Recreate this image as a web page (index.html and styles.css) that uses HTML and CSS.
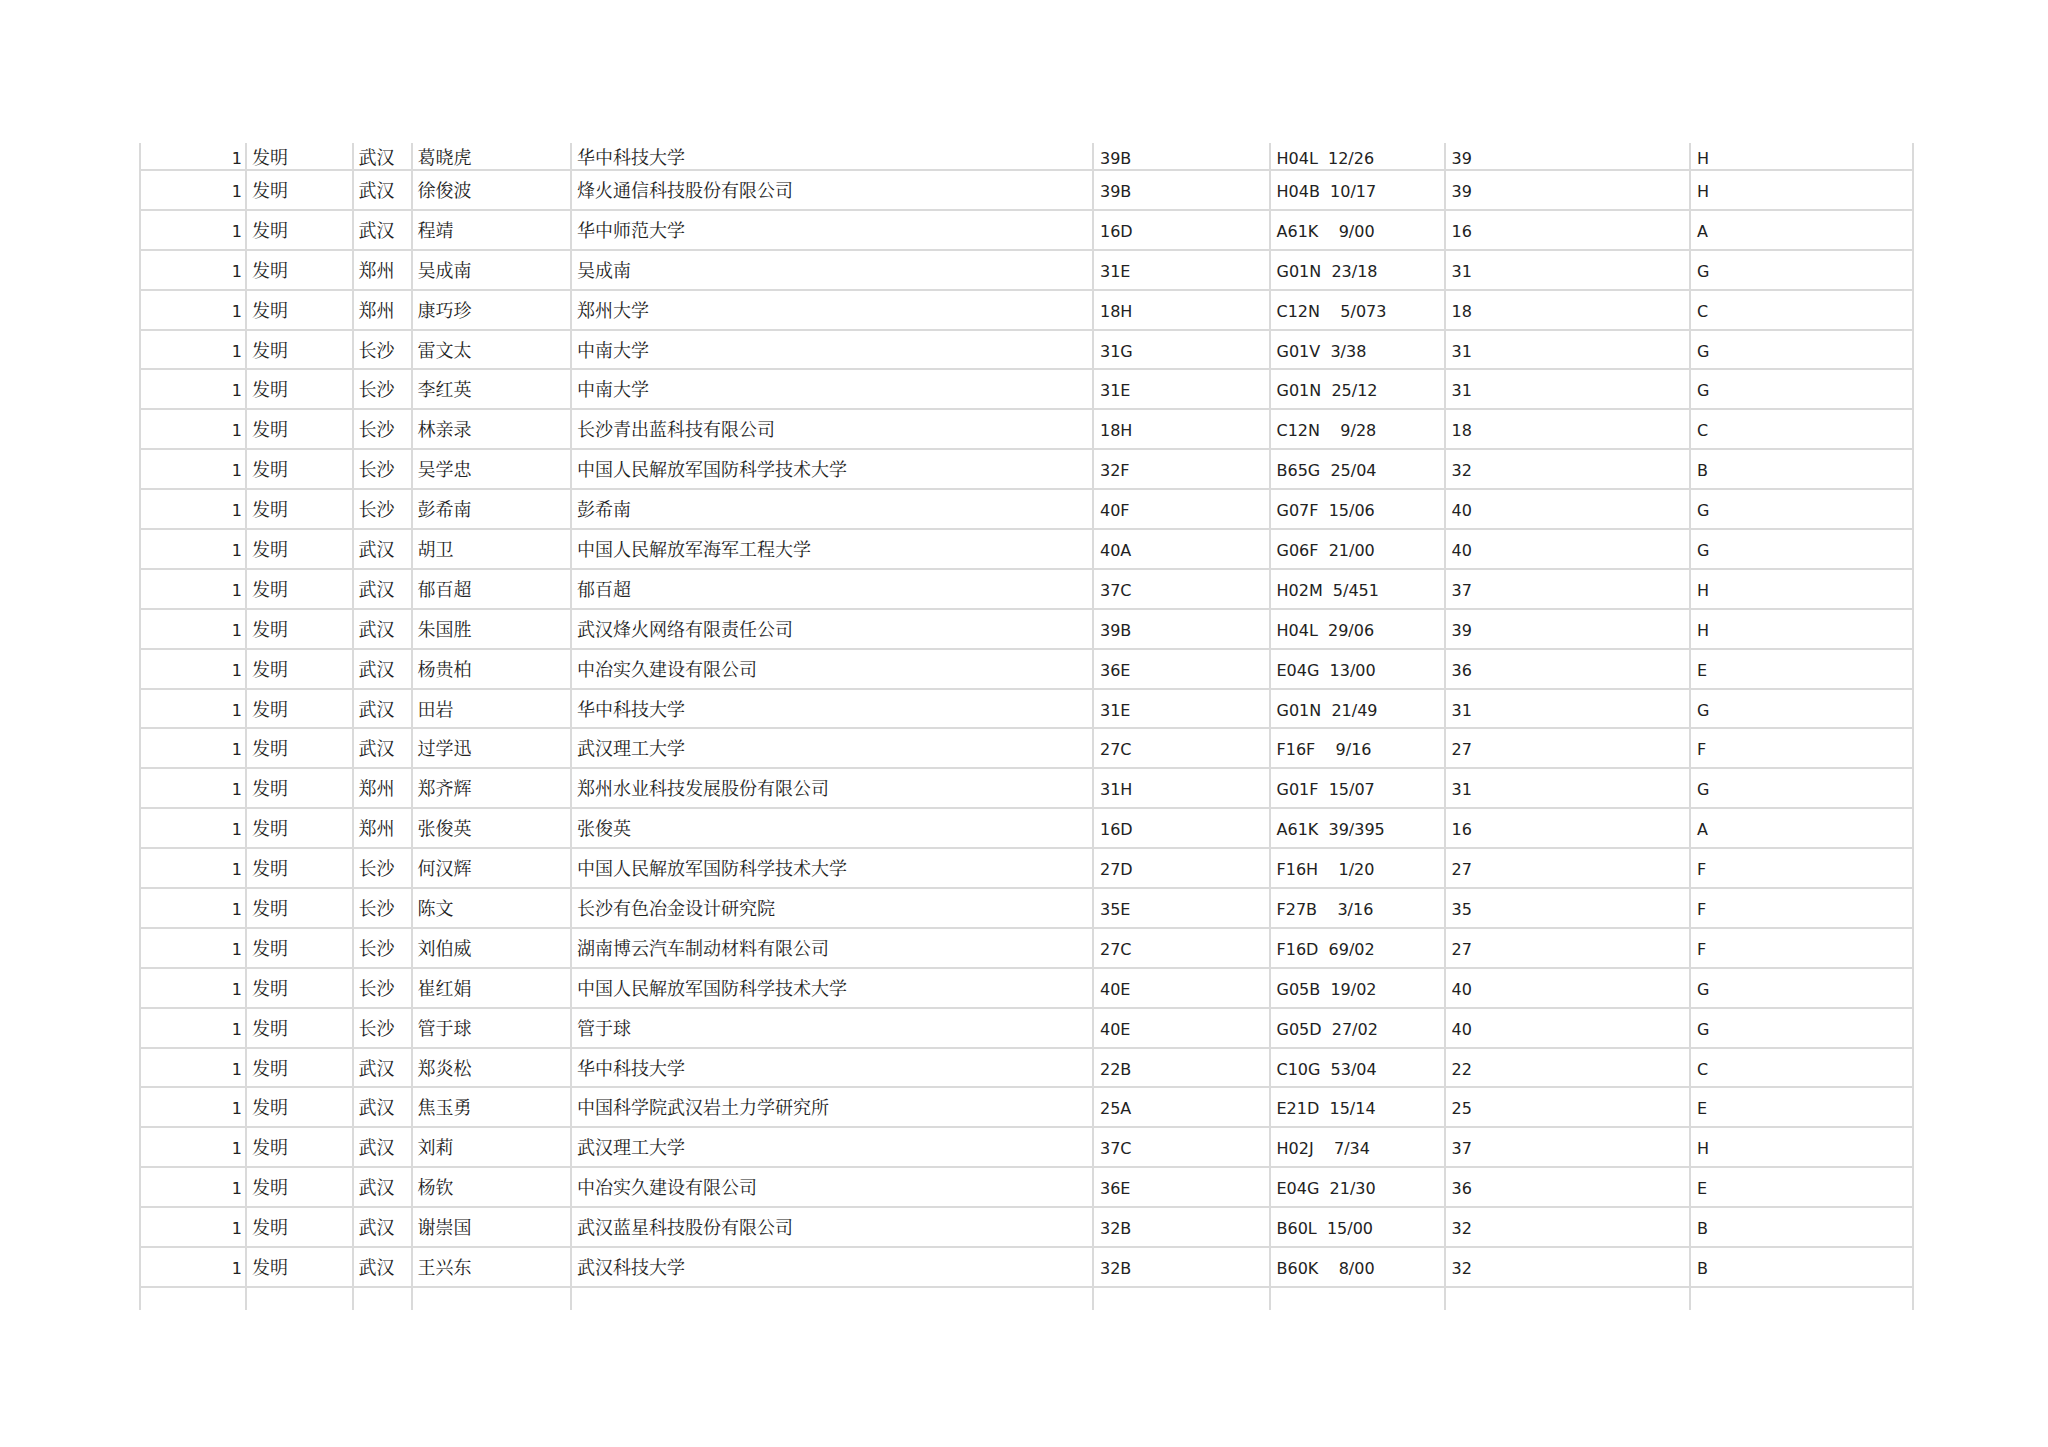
FILE: index.html
```html
<!DOCTYPE html>
<html lang="zh-CN">
<head>
<meta charset="utf-8">
<title>专利列表</title>
<link rel="stylesheet" href="styles.css">
</head>
<body>
<div class="sheet">
<div class="grid">
<div class="row first"><span class="c n">1</span><span class="c z">发明</span><span class="c z">武汉</span><span class="c z">葛晓虎</span><span class="c z">华中科技大学</span><span class="c">39B</span><span class="c">H04L  12/26</span><span class="c">39</span><span class="c">H</span></div>
<div class="row"><span class="c n">1</span><span class="c z">发明</span><span class="c z">武汉</span><span class="c z">徐俊波</span><span class="c z">烽火通信科技股份有限公司</span><span class="c">39B</span><span class="c">H04B  10/17</span><span class="c">39</span><span class="c">H</span></div>
<div class="row"><span class="c n">1</span><span class="c z">发明</span><span class="c z">武汉</span><span class="c z">程靖</span><span class="c z">华中师范大学</span><span class="c">16D</span><span class="c">A61K  &#8199;9/00</span><span class="c">16</span><span class="c">A</span></div>
<div class="row"><span class="c n">1</span><span class="c z">发明</span><span class="c z">郑州</span><span class="c z">吴成南</span><span class="c z">吴成南</span><span class="c">31E</span><span class="c">G01N  23/18</span><span class="c">31</span><span class="c">G</span></div>
<div class="row"><span class="c n">1</span><span class="c z">发明</span><span class="c z">郑州</span><span class="c z">康巧珍</span><span class="c z">郑州大学</span><span class="c">18H</span><span class="c">C12N  &#8199;5/073</span><span class="c">18</span><span class="c">C</span></div>
<div class="row"><span class="c n">1</span><span class="c z">发明</span><span class="c z">长沙</span><span class="c z">雷文太</span><span class="c z">中南大学</span><span class="c">31G</span><span class="c">G01V  3/38</span><span class="c">31</span><span class="c">G</span></div>
<div class="row"><span class="c n">1</span><span class="c z">发明</span><span class="c z">长沙</span><span class="c z">李红英</span><span class="c z">中南大学</span><span class="c">31E</span><span class="c">G01N  25/12</span><span class="c">31</span><span class="c">G</span></div>
<div class="row"><span class="c n">1</span><span class="c z">发明</span><span class="c z">长沙</span><span class="c z">林亲录</span><span class="c z">长沙青出蓝科技有限公司</span><span class="c">18H</span><span class="c">C12N  &#8199;9/28</span><span class="c">18</span><span class="c">C</span></div>
<div class="row"><span class="c n">1</span><span class="c z">发明</span><span class="c z">长沙</span><span class="c z">吴学忠</span><span class="c z">中国人民解放军国防科学技术大学</span><span class="c">32F</span><span class="c">B65G  25/04</span><span class="c">32</span><span class="c">B</span></div>
<div class="row"><span class="c n">1</span><span class="c z">发明</span><span class="c z">长沙</span><span class="c z">彭希南</span><span class="c z">彭希南</span><span class="c">40F</span><span class="c">G07F  15/06</span><span class="c">40</span><span class="c">G</span></div>
<div class="row"><span class="c n">1</span><span class="c z">发明</span><span class="c z">武汉</span><span class="c z">胡卫</span><span class="c z">中国人民解放军海军工程大学</span><span class="c">40A</span><span class="c">G06F  21/00</span><span class="c">40</span><span class="c">G</span></div>
<div class="row"><span class="c n">1</span><span class="c z">发明</span><span class="c z">武汉</span><span class="c z">郁百超</span><span class="c z">郁百超</span><span class="c">37C</span><span class="c">H02M  5/451</span><span class="c">37</span><span class="c">H</span></div>
<div class="row"><span class="c n">1</span><span class="c z">发明</span><span class="c z">武汉</span><span class="c z">朱国胜</span><span class="c z">武汉烽火网络有限责任公司</span><span class="c">39B</span><span class="c">H04L  29/06</span><span class="c">39</span><span class="c">H</span></div>
<div class="row"><span class="c n">1</span><span class="c z">发明</span><span class="c z">武汉</span><span class="c z">杨贵柏</span><span class="c z">中冶实久建设有限公司</span><span class="c">36E</span><span class="c">E04G  13/00</span><span class="c">36</span><span class="c">E</span></div>
<div class="row"><span class="c n">1</span><span class="c z">发明</span><span class="c z">武汉</span><span class="c z">田岩</span><span class="c z">华中科技大学</span><span class="c">31E</span><span class="c">G01N  21/49</span><span class="c">31</span><span class="c">G</span></div>
<div class="row"><span class="c n">1</span><span class="c z">发明</span><span class="c z">武汉</span><span class="c z">过学迅</span><span class="c z">武汉理工大学</span><span class="c">27C</span><span class="c">F16F  &#8199;9/16</span><span class="c">27</span><span class="c">F</span></div>
<div class="row"><span class="c n">1</span><span class="c z">发明</span><span class="c z">郑州</span><span class="c z">郑齐辉</span><span class="c z">郑州水业科技发展股份有限公司</span><span class="c">31H</span><span class="c">G01F  15/07</span><span class="c">31</span><span class="c">G</span></div>
<div class="row"><span class="c n">1</span><span class="c z">发明</span><span class="c z">郑州</span><span class="c z">张俊英</span><span class="c z">张俊英</span><span class="c">16D</span><span class="c">A61K  39/395</span><span class="c">16</span><span class="c">A</span></div>
<div class="row"><span class="c n">1</span><span class="c z">发明</span><span class="c z">长沙</span><span class="c z">何汉辉</span><span class="c z">中国人民解放军国防科学技术大学</span><span class="c">27D</span><span class="c">F16H  &#8199;1/20</span><span class="c">27</span><span class="c">F</span></div>
<div class="row"><span class="c n">1</span><span class="c z">发明</span><span class="c z">长沙</span><span class="c z">陈文</span><span class="c z">长沙有色冶金设计研究院</span><span class="c">35E</span><span class="c">F27B  &#8199;3/16</span><span class="c">35</span><span class="c">F</span></div>
<div class="row"><span class="c n">1</span><span class="c z">发明</span><span class="c z">长沙</span><span class="c z">刘伯威</span><span class="c z">湖南博云汽车制动材料有限公司</span><span class="c">27C</span><span class="c">F16D  69/02</span><span class="c">27</span><span class="c">F</span></div>
<div class="row"><span class="c n">1</span><span class="c z">发明</span><span class="c z">长沙</span><span class="c z">崔红娟</span><span class="c z">中国人民解放军国防科学技术大学</span><span class="c">40E</span><span class="c">G05B  19/02</span><span class="c">40</span><span class="c">G</span></div>
<div class="row"><span class="c n">1</span><span class="c z">发明</span><span class="c z">长沙</span><span class="c z">管于球</span><span class="c z">管于球</span><span class="c">40E</span><span class="c">G05D  27/02</span><span class="c">40</span><span class="c">G</span></div>
<div class="row"><span class="c n">1</span><span class="c z">发明</span><span class="c z">武汉</span><span class="c z">郑炎松</span><span class="c z">华中科技大学</span><span class="c">22B</span><span class="c">C10G  53/04</span><span class="c">22</span><span class="c">C</span></div>
<div class="row"><span class="c n">1</span><span class="c z">发明</span><span class="c z">武汉</span><span class="c z">焦玉勇</span><span class="c z">中国科学院武汉岩土力学研究所</span><span class="c">25A</span><span class="c">E21D  15/14</span><span class="c">25</span><span class="c">E</span></div>
<div class="row"><span class="c n">1</span><span class="c z">发明</span><span class="c z">武汉</span><span class="c z">刘莉</span><span class="c z">武汉理工大学</span><span class="c">37C</span><span class="c">H02J  &#8199;7/34</span><span class="c">37</span><span class="c">H</span></div>
<div class="row"><span class="c n">1</span><span class="c z">发明</span><span class="c z">武汉</span><span class="c z">杨钦</span><span class="c z">中冶实久建设有限公司</span><span class="c">36E</span><span class="c">E04G  21/30</span><span class="c">36</span><span class="c">E</span></div>
<div class="row"><span class="c n">1</span><span class="c z">发明</span><span class="c z">武汉</span><span class="c z">谢崇国</span><span class="c z">武汉蓝星科技股份有限公司</span><span class="c">32B</span><span class="c">B60L  15/00</span><span class="c">32</span><span class="c">B</span></div>
<div class="row"><span class="c n">1</span><span class="c z">发明</span><span class="c z">武汉</span><span class="c z">王兴东</span><span class="c z">武汉科技大学</span><span class="c">32B</span><span class="c">B60K  &#8199;8/00</span><span class="c">32</span><span class="c">B</span></div>
<div class="row last"><span class="c"></span><span class="c"></span><span class="c"></span><span class="c"></span><span class="c"></span><span class="c"></span><span class="c"></span><span class="c"></span><span class="c"></span></div>
</div>
</div>
</body>
</html>
```

FILE: styles.css
```css
html, body {
  margin: 0;
  padding: 0;
  background: #ffffff;
}

body {
  font-family: "DejaVu Sans", "Noto Serif CJK SC", "Noto Sans CJK SC", sans-serif;
  font-size: 16px;
  color: #222222;
}

.sheet {
  padding: 143px 0 0 139px;
}

.grid {
  width: 1775px;
}

.row {
  display: grid;
  grid-template-columns: 106px 106.5px 59px 159.5px 522px 176.5px 175px 245.5px 223px;
  box-sizing: border-box;
  width: 1775px;
  height: 39.9px;
  border-top: 2px solid #dadada;
  border-right: 2px solid #dadada;
}

.row.first {
  height: 26px;
  border-top: none;
}

.row.last {
  height: 24px;
}

.c {
  box-sizing: border-box;
  border-left: 2px solid #dadada;
  padding: 11px 6px 0 6px;
  line-height: 20px;
  white-space: pre;
  overflow: hidden;
}

.c.z {
  font-size: 18px;
  padding-top: 10px;
  padding-left: 5px;
}

.row.first .c {
  padding-top: 5.5px;
}

.row.first .c.z {
  padding-top: 4.5px;
}

.c.n {
  text-align: right;
  padding-right: 3px;
}
```
